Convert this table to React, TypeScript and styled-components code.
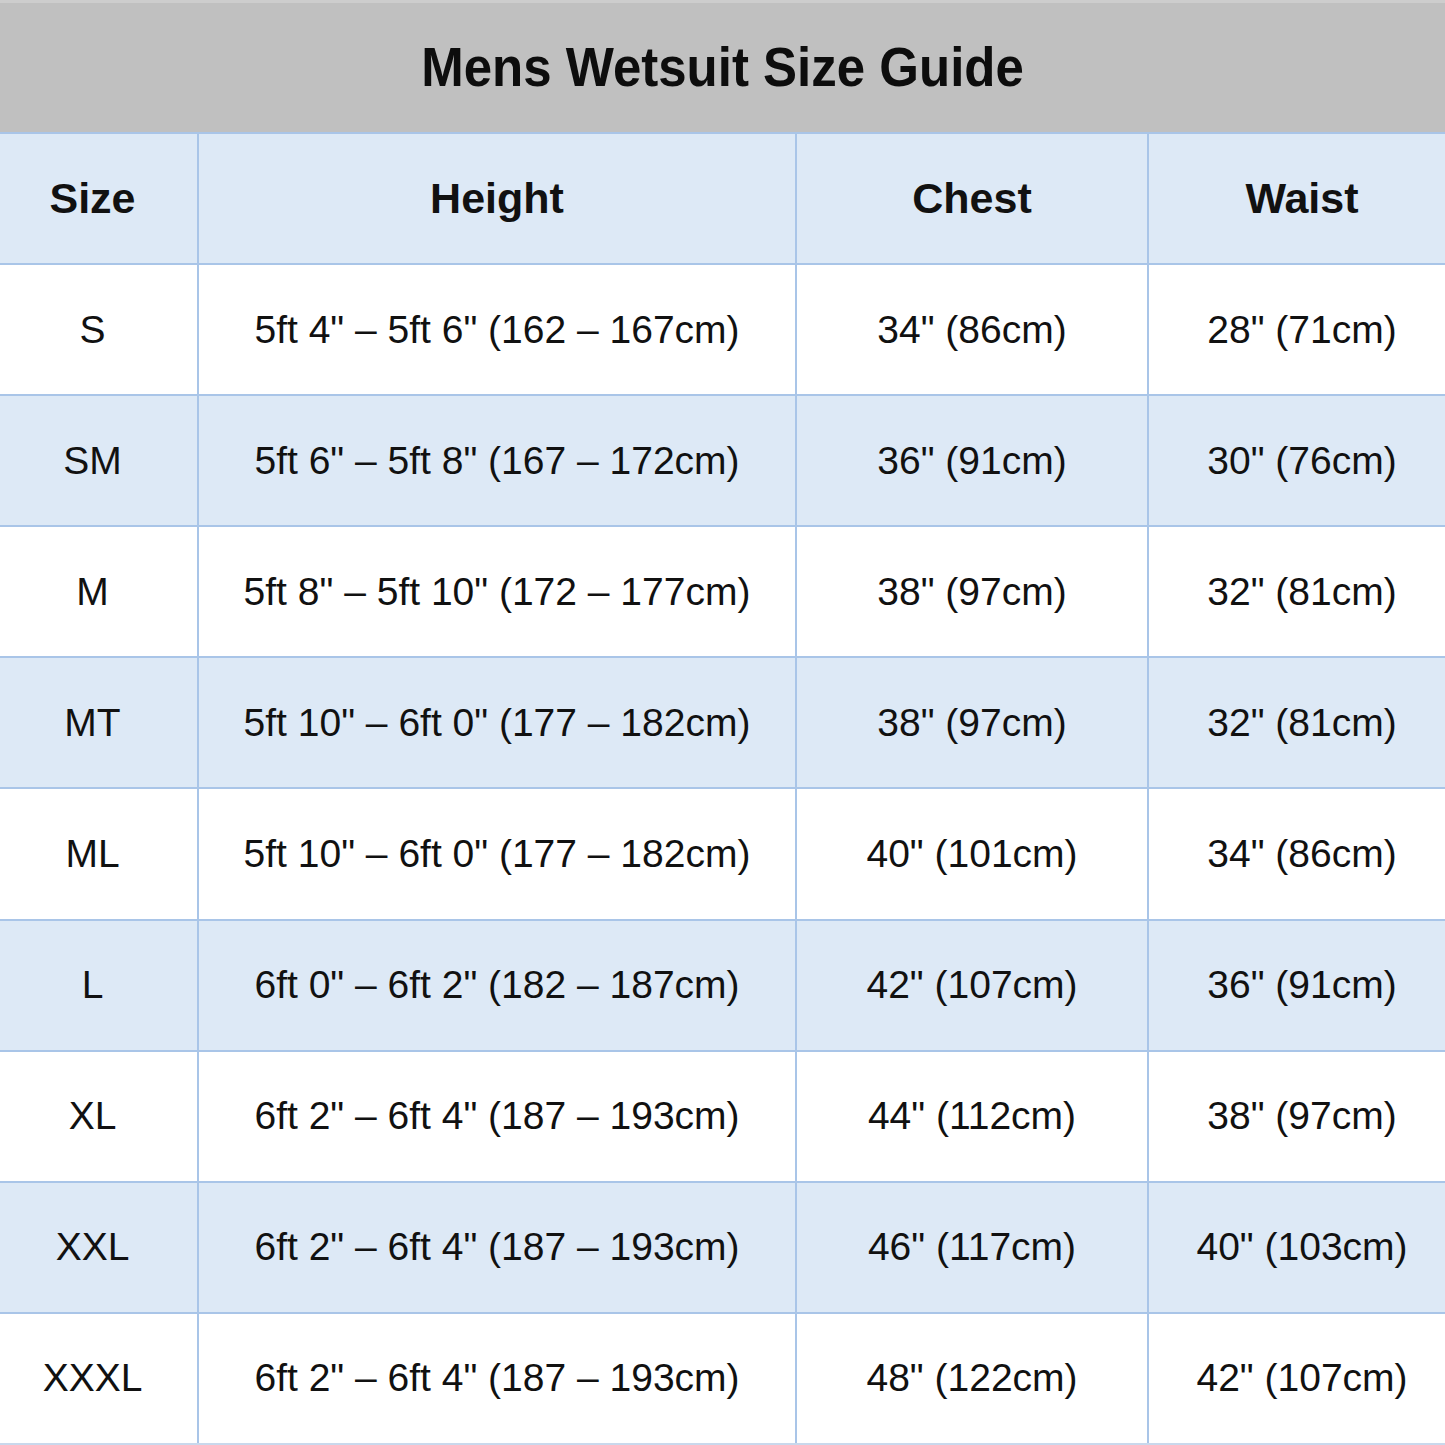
import React from "react";
import styled, { createGlobalStyle } from "styled-components";

const GlobalStyle = createGlobalStyle`
  html, body {
    margin: 0;
    padding: 0;
    background: #ffffff;
  }
  body {
    font-family: 'Liberation Sans', Arial, sans-serif;
    color: #111111;
  }
`;

const Page = styled.div`
  width: 1445px;
  height: 1445px;
  display: flex;
  flex-direction: column;
  overflow: hidden;
`;

const TitleBar = styled.div`
  height: 132px;
  flex: none;
  display: flex;
  align-items: center;
  justify-content: center;
  background: #c0c0c0;
  border-top: 3px solid #cdcdcd;
  box-sizing: border-box;
`;

const Title = styled.h1`
  margin: 0;
  font-family: 'Liberation Sans', Arial, sans-serif;
  font-size: 51px;
  font-weight: 700;
  color: #0d0d0d;
  transform: scaleY(1.07);
`;

const Row = styled.div<{ $shade: boolean; $last?: boolean }>`
  flex: 1;
  display: grid;
  grid-template-columns: 197px 598px 352px 1fr;
  background: ${(p) => (p.$shade ? "#dde9f6" : "#ffffff")};
  border-top: 2px solid #a9c5e8;
  border-bottom: ${(p) => (p.$last ? "2px solid #c9d8ec" : "none")};
  box-sizing: border-box;
`;

const Cell = styled.div<{ $head?: boolean }>`
  display: flex;
  align-items: center;
  justify-content: center;
  font-size: ${(p) => (p.$head ? "43px" : "39px")};
  font-weight: ${(p) => (p.$head ? 700 : 400)};
  color: #111111;
  white-space: nowrap;
  box-sizing: border-box;

  &:first-child {
    padding-right: 12px;
  }
  &:last-child {
    padding-left: 10px;
  }
  & + & {
    border-left: 2px solid #a9c5e8;
  }
`;

const rows: [string, string, string, string][] = [
  ["S", "5ft 4\" – 5ft 6\" (162 – 167cm)", "34\" (86cm)", "28\" (71cm)"],
  ["SM", "5ft 6\" – 5ft 8\" (167 – 172cm)", "36\" (91cm)", "30\" (76cm)"],
  ["M", "5ft 8\" – 5ft 10\" (172 – 177cm)", "38\" (97cm)", "32\" (81cm)"],
  ["MT", "5ft 10\" – 6ft 0\" (177 – 182cm)", "38\" (97cm)", "32\" (81cm)"],
  ["ML", "5ft 10\" – 6ft 0\" (177 – 182cm)", "40\" (101cm)", "34\" (86cm)"],
  ["L", "6ft 0\" – 6ft 2\" (182 – 187cm)", "42\" (107cm)", "36\" (91cm)"],
  ["XL", "6ft 2\" – 6ft 4\" (187 – 193cm)", "44\" (112cm)", "38\" (97cm)"],
  ["XXL", "6ft 2\" – 6ft 4\" (187 – 193cm)", "46\" (117cm)", "40\" (103cm)"],
  ["XXXL", "6ft 2\" – 6ft 4\" (187 – 193cm)", "48\" (122cm)", "42\" (107cm)"],
];

export default function App() {
  return (
    <Page>
      <GlobalStyle />
      <TitleBar>
        <Title>Mens Wetsuit Size Guide</Title>
      </TitleBar>
      <Row $shade>
        <Cell $head>Size</Cell>
        <Cell $head>Height</Cell>
        <Cell $head>Chest</Cell>
        <Cell $head>Waist</Cell>
      </Row>
      {rows.map((r, i) => (
        <Row key={r[0]} $shade={i % 2 === 1} $last={i === rows.length - 1}>
          {r.map((c, j) => (
            <Cell key={j}>{c}</Cell>
          ))}
        </Row>
      ))}
    </Page>
  );
}
